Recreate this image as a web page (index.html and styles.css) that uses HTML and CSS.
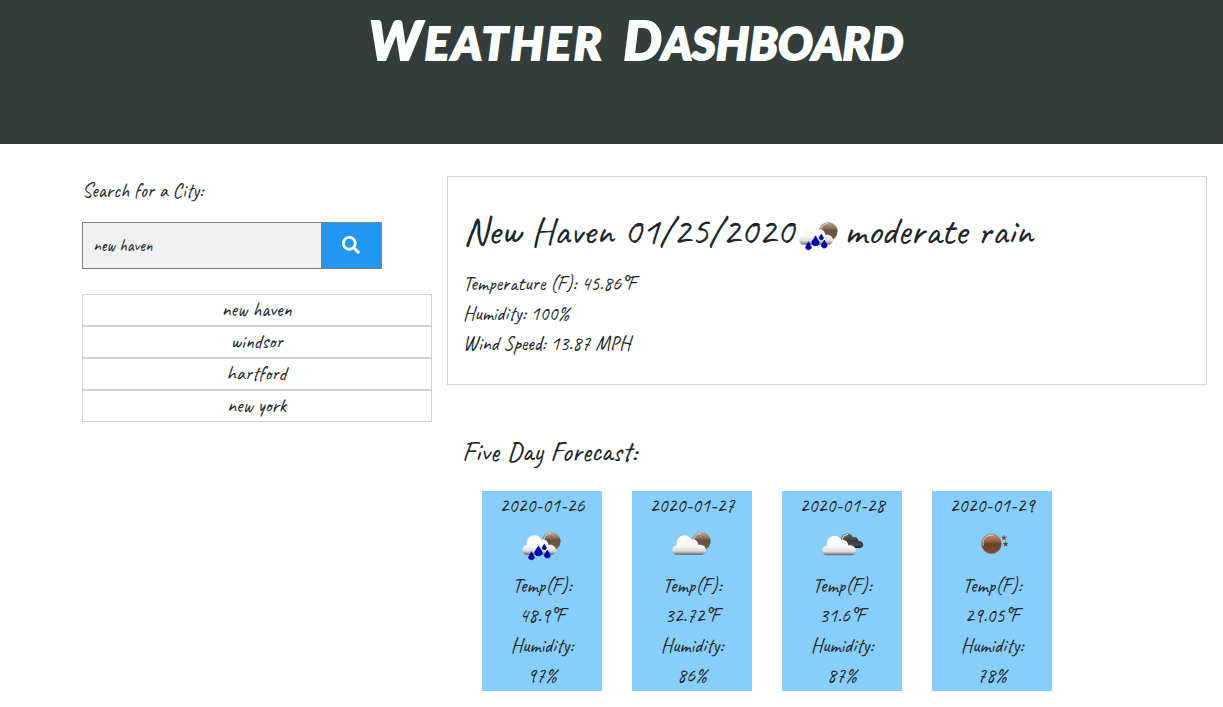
FILE: index.html
```html
<!DOCTYPE html>
<html lang="en">
<head>
<meta charset="utf-8">
<title>Weather Dashboard</title>
<link rel="stylesheet" href="styles.css">
</head>
<body>
<svg class="defs" width="0" height="0" aria-hidden="true">
  <defs>
    <linearGradient id="cloud" x1="0" y1="0" x2="0" y2="1"><stop offset="0" stop-color="#fff"/><stop offset=".55" stop-color="#f8f8f8"/><stop offset=".8" stop-color="#dcdcdc"/><stop offset=".92" stop-color="#999"/><stop offset="1" stop-color="#555"/></linearGradient>
    <linearGradient id="dark" x1="0" y1="0" x2="0" y2="1"><stop offset="0" stop-color="#666"/><stop offset=".5" stop-color="#3c3c3c"/><stop offset=".8" stop-color="#484848"/><stop offset="1" stop-color="#111"/></linearGradient>
    <linearGradient id="moon" x1="0" y1="0" x2="0" y2="1"><stop offset="0" stop-color="#c2ab9b"/><stop offset=".3" stop-color="#8f7462"/><stop offset=".45" stop-color="#65503f"/><stop offset="1" stop-color="#7d6049"/></linearGradient>
    <linearGradient id="clear" x1="0" y1="0" x2="0" y2="1"><stop offset="0" stop-color="#c99779"/><stop offset=".4" stop-color="#8d5c3e"/><stop offset=".5" stop-color="#67422b"/><stop offset="1" stop-color="#7b4e33"/></linearGradient>
    <path id="cloud-shape" d="M9 33.800C6.500 33.500 5.300 31.200 5.300 29.300C5.300 26.500 7.200 24.500 9.700 24C9.200 18 13 14.300 17.400 14.300C20.700 14.300 23 16 24.100 18.300C28 17.500 31 20 31.400 23.900C35.500 22.900 39 25.700 39 29C39 31.800 36.800 33.800 34 33.800Z"/>
    <g id="moon-cloud"><circle cx="34.300" cy="20.300" r="9.300" fill="url(#moon)"/><path d="M26.500 19Q28 12.700 34 12.300" fill="none" stroke="#e4d8cf" stroke-width="1"/><use href="#cloud-shape" fill="url(#cloud)"/></g>
    <path id="drop" d="M0-5C.4-3 3.600-.2 3.600 2C3.600 4 2 5 0 5S-3.600 4-3.600 2C-3.600-.2-.4-3 0-5Z" fill="#0000b8" stroke="#000070" stroke-width=".8"/>
    <symbol id="rain" viewBox="0 0 50 50"><use href="#moon-cloud"/><use href="#drop" transform="translate(21.500 29.800)"/><use href="#drop" transform="translate(14.500 34.700) scale(.8)"/><use href="#drop" transform="translate(30.300 33) scale(.8)"/><use href="#drop" transform="translate(27.300 25.800) scale(.6)"/></symbol>
    <symbol id="cloudy" viewBox="0 0 50 50"><use href="#moon-cloud"/></symbol>
    <symbol id="broken" viewBox="0 0 50 50"><path d="M24 27V19C24 15 27 12.500 30.500 12.600C33 12.700 35 14 36 16.200C39 15.500 41.500 17.200 41.300 20C44.500 19.500 46.500 21.500 46.300 24C46.100 26 44.500 27 42 27Z" fill="url(#dark)"/><path d="M24.800 19Q26.200 13.600 31 13.400" fill="none" stroke="#ccc" stroke-width="1.200"/><use href="#cloud-shape" y=".5" fill="url(#cloud)"/></symbol>
    <symbol id="night" viewBox="0 0 50 50"><circle cx="24.500" cy="22.800" r="9.900" fill="url(#clear)" stroke="#8e6b55" stroke-width=".5"/><path d="M16.300 24.600A8.300 8.300 0 0 1 25.800 14.300" fill="none" stroke="#efd5c5" stroke-width="1"/><path id="star" d="m37 13.600.9 2.100 2.100.1-1.600 1.400.6 2.100-1.900-1.100-1.900 1.100.6-2.100-1.700-1.400 2.200-.1Z" fill="#704d3b"/><use href="#star" x="1.500" y="6.200"/></symbol>
  </defs>
</svg>
<header class="banner"><h1 class="title"><span class="word weather">Weather</span> <span class="word">Dashboard</span></h1></header>
<main class="page">
  <aside class="side">
    <p class="label">Search for a City:</p>
    <form class="search">
      <input class="field" type="text" value="new haven" aria-label="City">
      <button class="go" type="button" aria-label="Search"><svg width="18" height="18" viewBox="0 0 512 512"><path fill="#fff" d="M505 442.700 405.300 343c-4.500-4.500-10.600-7-17-7H372c27.600-35.300 44-79.700 44-128C416 93.100 322.900 0 208 0S0 93.100 0 208s93.100 208 208 208c48.300 0 92.700-16.400 128-44v16.300c0 6.400 2.500 12.500 7 17l99.700 99.700c9.400 9.400 24.600 9.400 33.900 0l28.300-28.300c9.400-9.400 9.400-24.600.1-34zM208 336c-70.700 0-128-57.200-128-128 0-70.700 57.200-128 128-128 70.700 0 128 57.200 128 128 0 70.700-57.200 128-128 128z"/></svg></button>
    </form>
    <ul class="cities"><li>new haven</li><li>windsor</li><li>hartford</li><li>new york</li></ul>
  </aside>
  <section class="content">
    <article class="current">
      <h2 class="headline"><span class="place">New Haven 01/25/2020</span><svg class="icon"><use href="#rain"/></svg><span class="sky">moderate rain</span></h2>
      <p>Temperature (F): 45.86°F</p>
      <p>Humidity: 100%</p>
      <p>Wind Speed: 13.87 MPH</p>
    </article>
    <h3 class="subhead">Five Day Forecast:</h3>
    <div class="days">
      <div class="day"><p>2020-01-26</p><svg class="icon"><use href="#rain"/></svg><p>Temp(F):</p><p>48.9°F</p><p>Humidity:</p><p>97%</p></div>
      <div class="day"><p>2020-01-27</p><svg class="icon"><use href="#cloudy"/></svg><p>Temp(F):</p><p>32.72°F</p><p>Humidity:</p><p>86%</p></div>
      <div class="day"><p>2020-01-28</p><svg class="icon"><use href="#broken"/></svg><p>Temp(F):</p><p>31.6°F</p><p>Humidity:</p><p>87%</p></div>
      <div class="day"><p>2020-01-29</p><svg class="icon"><use href="#night"/></svg><p>Temp(F):</p><p>29.05°F</p><p>Humidity:</p><p>78%</p></div>
    </div>
  </section>
</main>
</body>
</html>
```
FILE: styles.css
```css
* { box-sizing: border-box; }
body { margin: 0; background: #fff; color: #212529; font: 400 20px/30px Caveat, Lato, cursive; overflow: hidden; }
h1, h2, h3, p, ul { margin: 0; padding: 0; font-weight: 400; white-space: nowrap; }
.defs { display: block; height: 0; }
.banner { height: 144px; background: #353d3a; border-bottom: 1px solid #323a37; padding: 6px 0 0 369px; }
.title { display: flex; gap: 19px; color: #fbfffc; font: italic 900 46px/68px Lato, sans-serif; text-transform: uppercase; -webkit-text-stroke: 2px #fbfffc; }
.word { display: block; letter-spacing: .2px; }
.weather { letter-spacing: 2.8px; }
.word::first-letter { font-size: 54px; }
.page { display: grid; grid-template-columns: 350px 760px; gap: 15px; padding: 32px 0 0 82px; }
.search { display: flex; width: 300px; height: 47px; margin: 16px 0 25px; border: 1px solid #808080; }
.field { width: 238px; border: 0; padding: 0 0 0 10px; background: #f1f1f1; color: #212529; font: 17px Caveat, Lato, cursive; outline: 0; }
.go { flex: 1; border: 0; border-left: 1px solid #808080; background: #2196f3; padding: 0 2px 2px 0; display: flex; align-items: center; justify-content: center; }
.cities { list-style: none; text-align: center; }
.cities li { height: 32px; padding-right: 1px; border: 1px solid #d3d3d3; }
.current { height: 209px; border: 1px solid #d3d3d3; padding: 30px 15px; }
.headline { display: flex; height: 48px; margin-bottom: 14px; font-size: 40px; line-height: 48px; }
.place { width: 331px; }
.icon { display: block; width: 50px; height: 50px; flex: none; }
.headline .icon { margin-top: 4px; }
.subhead { margin: 50px 0 22px 15px; font-size: 28px; line-height: 34px; }
.days { display: flex; gap: 30px; padding-left: 35px; }
.day { width: 120px; height: 200px; background: #87cefa; text-align: center; }
.day .icon { margin: 0 auto; }
```
